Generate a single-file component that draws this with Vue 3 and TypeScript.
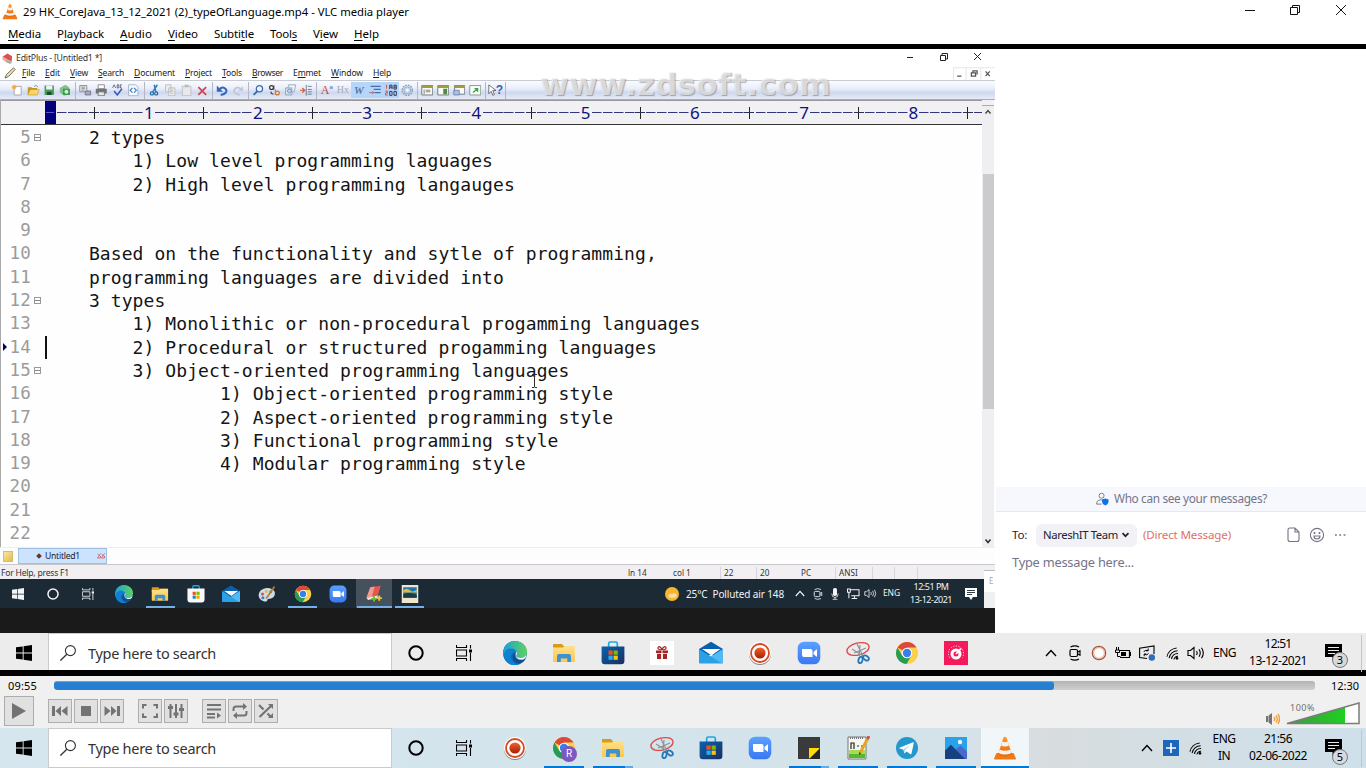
<script setup lang="ts">
type MenuItem = { pre: string; key: string; post: string; w: number }

/* Stretches or tightens the tracking of a label so that it fills a given width. */
const vFit = {
  mounted(el: HTMLElement, binding: { value: number }) {
    el.style.display = 'inline-block'
    el.style.flex = 'none'
    const natural = el.getBoundingClientRect().width
    const count = (el.textContent ?? '').trim().length
    el.style.letterSpacing = `${(binding.value - natural) / Math.max(count, 1)}px`
    el.style.width = `${binding.value}px`
  },
}

const m = (pre: string, key: string, post: string, w: number): MenuItem => ({ pre, key, post, w })

const vlcMenu: MenuItem[] = [
  m('', 'M', 'edia', 33), m('P', 'l', 'ayback', 47), m('', 'A', 'udio', 32), m('', 'V', 'ideo', 30),
  m('Subti', 't', 'le', 40), m('Tool', 's', '', 27), m('V', 'i', 'ew', 25), m('', 'H', 'elp', 25),
]
const editMenu: MenuItem[] = [
  m('', 'F', 'ile', 13), m('', 'E', 'dit', 15), m('', 'V', 'iew', 18), m('', 'S', 'earch', 26),
  m('', 'D', 'ocument', 41), m('', 'P', 'roject', 27), m('', 'T', 'ools', 20), m('', 'B', 'rowser', 31),
  m('E', 'm', 'met', 28), m('', 'W', 'indow', 32), m('', 'H', 'elp', 18),
]

const toolGroups: string[][] = [
  ['new', 'open', 'save', 'saveall'],
  ['preview', 'print', 'spell', 'code'],
  ['cut', 'copy', 'paste', 'del'],
  ['undo', 'redo'],
  ['find', 'replace', 'files', 'goto'],
  ['font', 'hx', 'wrap', 'indent', 'linenum', 'gear'],
  ['win1', 'win2', 'win3', 'win4'],
  ['help'],
]
const pressed = ['wrap', 'indent', 'linenum']
/* Tool buttons whose picture is made of letters. */
const letters: Record<string, string[]> = {
  font: ['A', 'ª'],
  hx: ['Hx'],
  wrap: ['W'],
  help: ['?'],
}

const ruler = Array.from({ length: 86 }, (_, i) => {
  const n = i + 1
  if (n % 10 === 0) return String(n / 10)
  return n % 5 === 0 ? '+' : '-'
})

type Line = { n: number; text: string; fold?: boolean; current?: boolean }
const tab = '    '
const lines: Line[] = [
  { n: 5, text: tab + '2 types', fold: true },
  { n: 6, text: tab + tab + '1) Low level programming laguages' },
  { n: 7, text: tab + tab + '2) High level programming langauges' },
  { n: 8, text: '' },
  { n: 9, text: '' },
  { n: 10, text: tab + 'Based on the functionality and sytle of programming,' },
  { n: 11, text: tab + 'programming languages are divided into' },
  { n: 12, text: tab + '3 types', fold: true },
  { n: 13, text: tab + tab + '1) Monolithic or non-procedural progamming languages' },
  { n: 14, text: tab + tab + '2) Procedural or structured progamming languages', current: true },
  { n: 15, text: tab + tab + '3) Object-oriented programming languages', fold: true },
  { n: 16, text: tab.repeat(4) + '1) Object-oriented programming style' },
  { n: 17, text: tab.repeat(4) + '2) Aspect-oriented programming style' },
  { n: 18, text: tab.repeat(4) + '3) Functional programming style' },
  { n: 19, text: tab.repeat(4) + '4) Modular programming style' },
  { n: 20, text: '' },
  { n: 21, text: '' },
  { n: 22, text: '' },
]

const innerApps = [
  { id: 'edge' }, { id: 'folder', run: true }, { id: 'storew' }, { id: 'mail' }, { id: 'paint' },
  { id: 'chrome', run: true }, { id: 'zoom' }, { id: 'editplus', run: true, on: true }, { id: 'picture', run: true },
]
const midApps = ['edge', 'folder', 'store', 'gift', 'mail', 'record', 'zoom', 'snip', 'chrome', 'gauge']
const lowApps = [
  { id: 'record' }, { id: 'chrome', run: true, badge: 'R' }, { id: 'folder', run: true, multi: true }, { id: 'snip' },
  { id: 'store' }, { id: 'zoom' }, { id: 'sticky', run: true, multi: true }, { id: 'npp', run: true },
  { id: 'telegram', run: true }, { id: 'photos', run: true }, { id: 'vlc', run: true, on: true },
]
const controlGroups = [['prev', 'stop', 'next'], ['full', 'eq'], ['list', 'loop', 'shuffle']]
</script>

<template>
  <div class="screen">
    <svg class="defs" width="0" height="0">
      <defs>
        <linearGradient id="gEdge" x1="0" y1="0" x2="1" y2="0"><stop offset="0" stop-color="#1d9fd8" /><stop offset="1" stop-color="#5fd35c" /></linearGradient>
        <linearGradient id="gFold" x1="0" y1="0" x2="0" y2="1"><stop offset="0" stop-color="#ffe08a" /><stop offset="1" stop-color="#fbc84a" /></linearGradient>
        <linearGradient id="gStore" x1="0" y1="0" x2="1" y2="1"><stop offset="0" stop-color="#0a62b0" /><stop offset="1" stop-color="#1b2f5e" /></linearGradient>
        <linearGradient id="gZoom" x1="0" y1="0" x2="0" y2="1"><stop offset="0" stop-color="#5aa0ff" /><stop offset="1" stop-color="#3a78f2" /></linearGradient>
        <linearGradient id="gRec" x1="0" y1="0" x2="0" y2="1"><stop offset="0" stop-color="#f0642a" /><stop offset="1" stop-color="#a81e00" /></linearGradient>
        <linearGradient id="gCone" x1="0" y1="0" x2="0" y2="1"><stop offset="0" stop-color="#ff9a2b" /><stop offset="1" stop-color="#f0640a" /></linearGradient>
        <linearGradient id="gVol" x1="0" y1="0" x2="1" y2="0"><stop offset="0" stop-color="#3c9a45" /><stop offset="1" stop-color="#1ed01e" /></linearGradient>
      </defs>
      <symbol id="win" viewBox="0 0 16 16"><path d="M0 2.300 6.700 1.400V7.500H0zM7.600 1.200 16 0V7.500H7.600zM0 8.500H6.700V14.600L0 13.700zM7.600 8.500H16V16L7.600 14.800z" fill="currentColor" /></symbol>
      <symbol id="cortana" viewBox="0 0 16 16"><circle cx="8" cy="8" r="6.700" fill="none" stroke="currentColor" stroke-width="2" /></symbol>
      <symbol id="taskview" viewBox="0 0 16 16"><path d="M.5 0V2.500H10.500V0M.5 16V13.500H10.500V16M.5 5H10.500V11H.5zM14.500 0V3.500M14.500 8V16" fill="none" stroke="currentColor" stroke-width="1.100" /><path d="M13 4.500h3v3h-3z" fill="currentColor" /></symbol>
      <symbol id="magnify" viewBox="0 0 16 16"><circle cx="10.400" cy="5.600" r="5" fill="none" stroke="currentColor" stroke-width="1.100" /><path d="M6.800 9.200.4 15.600" stroke="currentColor" stroke-width="1.300" /></symbol>
      <symbol id="edge" viewBox="0 0 24 24"><circle cx="12" cy="12" r="12" fill="#116ab8" /><path d="M.3 10C1.500 3 7 0 12.200 0 19 0 24 5 24 11c0 4-3 6-6.500 6-3 0-4.500-1-4-2 1.300-1.800.8-6-4-6C5 9 1 12 1 16 0 14 0 12 .3 10z" fill="url(#gEdge)" /><path d="M1 16C0 11 4 7 9 7.500c3 .4 5 2.500 4.700 5C11 10 7 13 8 17c1 4 4 6 8 6.300C9 26 2 22 1 16z" fill="#0d80cf" /><path d="M13.500 13c-1.500.8-2.500 6 4.500 6 2 0 3.500-.6 4.500-1.200-2.500 5-8 6-11 3-3-3.500-2-8 1-9z" fill="#124d91" /><path d="M13.500 10.500c1 1.500.4 3-.2 4-.6 1.300 1 2.500 4.200 2.500 2.500 0 5-1.200 6-3.500-.4 3-1.600 5.200-4.500 5.200-4.500.3-7.700-3-6-7z" fill="#f2f7fa" /></symbol>
      <symbol id="folder" viewBox="0 0 24 24"><path d="M1 3.500Q1 3 1.500 3H10l1.500 2H22v4H1z" fill="#d99b13" /><path d="M1 6.500H11L12.500 5H22.200q.6 0 .6.600V20.400q0 .6-.6.600H1.600q-.6 0-.6-.6z" fill="url(#gFold)" /><path d="M5 21v-6q0-2 2-2H17q2 0 2 2V21H15.300V17.500H8.800V21z" fill="#3f92d2" /></symbol>
      <symbol id="store" viewBox="0 0 24 24"><path d="M7.700 6V2.500Q7.700 1 9.200 1h5.600q1.500 0 1.500 1.500V6" fill="none" stroke="#18a8e6" stroke-width="1.700" /><path d="M.6 5.500H23.400V20q0 3.200-3.200 3.200H3.800Q.6 23.200.6 20z" fill="url(#gStore)" /><path d="M7.500 9.500h4.200v4.200H7.500z" fill="#f25022" /><path d="M12.600 9.500h4.200v4.200h-4.200z" fill="#7fba00" /><path d="M7.500 14.600h4.200v4.200H7.500z" fill="#22b0f5" /><path d="M12.600 14.600h4.200v4.200h-4.200z" fill="#ffc20e" /></symbol>
      <symbol id="storew" viewBox="0 0 24 24"><path d="M7.700 6V2.500Q7.700 1 9.200 1h5.600q1.500 0 1.500 1.500V6" fill="none" stroke="#18a8e6" stroke-width="1.700" /><path d="M.6 4.500H23.400V20q0 3.200-3.200 3.200H3.800Q.6 23.200.6 20z" fill="#f8f8f8" /><path d="M7.500 9h4.200v4.200H7.500z" fill="#f25022" /><path d="M12.600 9h4.200v4.200h-4.200z" fill="#7fba00" /><path d="M7.500 14.100h4.200v4.200H7.500z" fill="#0a90d8" /><path d="M12.600 14.100h4.200v4.200h-4.200z" fill="#f0a800" /></symbol>
      <symbol id="gift" viewBox="0 0 24 24"><path d="M0 0h24v24H0z" fill="#fff" /><path d="M6 9.500h12V12H6zM7 12.800h4.200V18H7zM12.800 12.800H17V18h-4.200z" fill="#a62424" /><path d="M12 9C9 9 7.500 8 8 6.500S11 5.500 12 9c1-3.500 3.500-4 4-2.500S15 9 12 9z" fill="none" stroke="#a62424" stroke-width="1.200" /><path d="M12 9v9" stroke="#fff" /></symbol>
      <symbol id="mail" viewBox="0 0 24 24"><path d="M0 8 12 .8 24 8V14H0z" fill="#0a5fac" /><path d="M0 8 12 15.500 24 8V21.500q0 1-1 1H1q-1 0-1-1z" fill="#2aa0e6" /><path d="M3 8H21.500L12.500 14.500z" fill="#f7fbff" /><path d="M24 8 12 15.500 22.700 22.500 24 22z" fill="#52b9f5" /></symbol>
      <symbol id="record" viewBox="0 0 24 24"><circle cx="12" cy="13" r="11" fill="#5b4a46" opacity=".65" /><circle cx="12" cy="12" r="11" fill="#fff" /><circle cx="12" cy="12" r="9" fill="none" stroke="#d54a20" stroke-width="1.800" /><circle cx="12" cy="12" r="5.600" fill="url(#gRec)" /></symbol>
      <symbol id="zoom" viewBox="0 0 24 24"><rect x=".7" y=".7" width="22.600" height="22.600" rx="6.500" fill="url(#gZoom)" /><path d="M5 8h8.500q2 0 2 2v6H7q-2 0-2-2zM16.500 11l3-2.600q.5-.3.500.4v6.600q0 .6-.5.200l-3-2.400z" fill="#fff" /></symbol>
      <symbol id="snip" viewBox="0 0 24 24"><g fill="none"><ellipse cx="12" cy="8" rx="11.300" ry="6" transform="rotate(-14 12 8)" stroke="#e14646" stroke-width="1.300" /><path d="M11 3l6 12M20 7 8 12M6 8l11 7M14 4l-1 11" stroke="#8b9298" stroke-width="1.200" /><ellipse cx="14.500" cy="19" rx="2" ry="3.200" transform="rotate(15 14.500 19)" stroke="#2577b8" stroke-width="1.800" /><ellipse cx="20" cy="17" rx="3.200" ry="2" transform="rotate(35 20 17)" stroke="#2577b8" stroke-width="1.800" /></g></symbol>
      <symbol id="chrome" viewBox="0 0 24 24"><circle cx="12" cy="12" r="11" fill="#fdd04a" /><path d="M12 12 2.500 6.500A11 11 0 0 1 21.500 6.500H12z" fill="#db4a39" /><path d="M2.470 6.500A11 11 0 0 0 11.500 23L16.500 14.500 12 12 7.300 14.700z" fill="#259b58" /><circle cx="12" cy="12" r="5.300" fill="#fff" /><circle cx="12" cy="12" r="4.200" fill="#3b7ded" /></symbol>
      <symbol id="gauge" viewBox="0 0 24 24"><path d="M0 0h24v24H0z" fill="#f5185a" /><circle cx="12" cy="13" r="4" fill="none" stroke="#fff" stroke-width="3" /><path d="M12 13 17 7.500" stroke="#fff" stroke-width="1.800" /><path d="M5.500 16.500A7.600 7.600 0 1 1 18.500 16.500" fill="none" stroke="#fff" stroke-dasharray="1 1.600" /></symbol>
      <symbol id="sticky" viewBox="0 0 24 24"><path d="M1 1h22v22H1z" fill="#3a3a3a" /><path d="M12 23V12h11z" fill="#ffd900" /><path d="M12 23 23 12V23z" fill="#272727" /><path d="M12.500 12.500H22.500L12.500 22.500z" fill="#ffdd00" /></symbol>
      <symbol id="npp" viewBox="0 0 24 24"><path d="M2 1h18v22H2z" fill="#f7f7f2" stroke="#777" /><path d="M3 14h16v8H3z" fill="#a4dd55" /><path d="M3 18h16v4H3z" fill="#55ba28" /><path d="M5 13V7h3v6M11 10h2M15 10h2" fill="none" stroke="#222" stroke-width="1.200" /><path d="M4 2h14" stroke="#777" stroke-width="2" stroke-dasharray="1 1" /><path d="M22 2 14 17" stroke="#e7a425" stroke-width="3" /><path d="M23 0 21.500 3" stroke="#cc5050" stroke-width="3" /><path d="M13.500 16 13 19l2-1.500z" fill="#222" /></symbol>
      <symbol id="telegram" viewBox="0 0 24 24"><circle cx="12" cy="12" r="11" fill="#2298cf" /><path d="M4.500 11.800 18 6.300q1-.3.800.8L16.500 17.600q-.3 1-1.300.4l-3.500-2.600-1.700 1.700q-.5.400-.7-.2l-1-3.400-3.700-1.100q-.8-.3-.1-.6z" fill="#fff" /><path d="m8.500 13.500 7-4.800-5.500 5.500v2.900z" fill="#a9d5ec" /></symbol>
      <symbol id="photos" viewBox="0 0 24 24"><path d="M1 1h22v22H1z" fill="#2ba2e8" /><path d="M12 13.500 16.500 9.500 23 15.500V23H12z" fill="#4a67cc" /><path d="M1 14.500 7 8.800 21 23H1z" fill="#174080" /><circle cx="16" cy="6" r="2.200" fill="#e8f5ff" /></symbol>
      <symbol id="vlc" viewBox="0 0 24 24"><path d="M3.500 17h17L23 22.500q0 1-1 1H2q-1 0-1-1z" fill="#f07a16" /><path d="M10.500 1.500Q12 0 13.500 1.500L19 18.500Q12 22 5 18.500z" fill="url(#gCone)" /><path d="M9.300 5.600Q12 7 14.800 5.600L16 9.500Q12 11.500 8 9.500zM6.600 13.500Q12 16.200 17.400 13.500L18.500 17Q12 20 5.500 17z" fill="#f2f2f0" /></symbol>
      <symbol id="paint" viewBox="0 0 24 24"><path d="M1 15C0 8 7 3 14 4s10 5 8 10-8 4-9 5 0 3-3 3-8-2-9-7z" fill="#cfdbe4" /><circle cx="6" cy="12" r="2" fill="#d9504a" /><circle cx="11" cy="8.500" r="2" fill="#e6b93c" /><circle cx="17" cy="9" r="2" fill="#4f9e50" /><circle cx="6.500" cy="17" r="2" fill="#3b7cc9" /><path d="M22 2 11 18" stroke="#b37a3c" stroke-width="2.200" /></symbol>
      <symbol id="editplus" viewBox="0 0 24 24"><path d="M7 3 21 1 17 14 2 17z" fill="#e4574f" /><path d="M7 3 13 2 9 16 2 17z" fill="#f29a92" /><path d="M2 17 17 14V17L4 20z" fill="#f6e5df" /><path d="M12 15v7M8.500 18.500h7" stroke="#67c13a" stroke-width="2.600" /><path d="M19 14v7M15.500 17.500h7" stroke="#f0c52d" stroke-width="2.400" /></symbol>
      <symbol id="epbook" viewBox="0 0 24 24"><path d="M1 8 12 1 22 7 21 19 10 13z" fill="#d9534c" /><path d="M1 8 10 13 9 20 1 14z" fill="#f1a9a2" /><path d="M9 13 22 20 18 24 9 20z" fill="#a9b09a" /></symbol>
      <symbol id="picture" viewBox="0 0 24 24"><path d="M1 0h22v24H1z" fill="#efe6cd" /><path d="M3 3h18v14H3z" fill="#1876b4" /><path d="M3 7q5-4 9 0t9-1V10H3z" fill="#e3b73b" /><path d="M3 12q9-3 18 1v4H3z" fill="#183d48" /></symbol>

      <symbol id="t-new" viewBox="0 0 16 16"><path d="M4 3h9v11H4z" fill="#fff" stroke="#999" /><path d="M4 1v6M1 4h6M2 2l4 4M6 2 2 6" stroke="#f3a83a" stroke-width="1.300" /></symbol>
      <symbol id="t-open" viewBox="0 0 16 16"><path d="M1 4h5l1 1h6v9H1z" fill="#c99422" /><path d="M4 7h12l-3 7H1z" fill="#f8d668" stroke="#b78520" stroke-width=".6" /><path d="M9 3q3-3 5 1" fill="none" stroke="#48a" /></symbol>
      <symbol id="t-save" viewBox="0 0 16 16"><path d="M2 2h12v12H2z" fill="#4d9b5b" /><path d="M4 2h8v5H4z" fill="#eef5ee" /><path d="M5 10h6v4H5z" fill="#1c4f30" /></symbol>
      <symbol id="t-saveall" viewBox="0 0 16 16"><path d="M1 5 8 1l5 3v8l-6 3-6-4z" fill="#7fc28b" /><path d="M5 6h9v8H5z" fill="#3f9a52" /><circle cx="9.500" cy="10" r="2.500" fill="#d9ead9" /></symbol>
      <symbol id="t-preview" viewBox="0 0 16 16"><path d="M1 2h9v8H1z" fill="#eee" stroke="#778" /><path d="M3 4h5M3 6h5M3 8h4" stroke="#778" /><path d="M8 9h7v5H8z" fill="#aab" stroke="#667" /></symbol>
      <symbol id="t-print" viewBox="0 0 16 16"><path d="M4 1h8v5H4z" fill="#fff" stroke="#777" /><path d="M1 6h14v6H1z" fill="#6f737a" /><path d="M4 10h8v5H4z" fill="#e6e6e6" stroke="#666" /></symbol>
      <symbol id="t-spell" viewBox="0 0 16 16"><path d="M2 5 4 1l2 4M8 1v4h2V1zM14 1h-2v4h2" fill="none" stroke="#456" /><path d="m4 9 4 5 6-8" fill="none" stroke="#3a58c0" stroke-width="2" /></symbol>
      <symbol id="t-code" viewBox="0 0 16 16"><path d="M2 1h9l3 3v11H2z" fill="#f6f9fd" stroke="#9ab" /><path d="M7 5 4 8l3 3M9 5l3 3-3 3" fill="none" stroke="#3a85c8" stroke-width="1.500" /></symbol>
      <symbol id="t-cut" viewBox="0 0 16 16"><path d="M12 1 6 10M8 1l2 9" stroke="#3280c0" stroke-width="2" /><circle cx="5" cy="12" r="2" fill="none" stroke="#246ea8" stroke-width="1.600" /><circle cx="10.500" cy="12" r="2" fill="none" stroke="#246ea8" stroke-width="1.600" /></symbol>
      <symbol id="t-copy" viewBox="0 0 16 16"><path d="M2 1h7v9H2zM6 5h8v10H6z" fill="#eee" stroke="#b5b5ba" /><path d="M8 8h4M8 10h4M8 12h4" stroke="#bbb" /></symbol>
      <symbol id="t-paste" viewBox="0 0 16 16"><path d="M3 3h11v12H3z" fill="#e9e9ec" stroke="#b7b7bd" /><path d="M6 1h5v3H6z" fill="#b9b9bf" /></symbol>
      <symbol id="t-del" viewBox="0 0 16 16"><path d="M3 4 13 14M13 4 3 14" stroke="#d2424a" stroke-width="2.200" /></symbol>
      <symbol id="t-undo" viewBox="0 0 16 16"><path d="M6 14c7-1 9-5 6-8-2-2-5-2-8 1" fill="none" stroke="#3468b8" stroke-width="2.600" /><path d="M1 2v8h8z" fill="#3468b8" /></symbol>
      <symbol id="t-redo" viewBox="0 0 16 16"><path d="M10 14c-7-1-9-5-6-8 2-2 5-2 8 1" fill="none" stroke="#c2c7d0" stroke-width="2.200" /><path d="M14 3v6H8z" fill="#c2c7d0" /></symbol>
      <symbol id="t-find" viewBox="0 0 16 16"><circle cx="9.500" cy="6" r="4" fill="#eaf3ff" stroke="#3a6cb0" stroke-width="1.600" /><path d="M7 9 2 14" stroke="#3a6cb0" stroke-width="2.400" /></symbol>
      <symbol id="t-replace" viewBox="0 0 16 16"><circle cx="4.500" cy="4.500" r="2.500" fill="none" stroke="#334" stroke-width="1.500" /><path d="M7.500 2v5.500M4 9.500v2.500l3 1" fill="none" stroke="#334" stroke-width="1.300" /><circle cx="12" cy="11.500" r="2.500" fill="none" stroke="#d87b2c" stroke-width="1.600" /><path d="M9.500 7v7" stroke="#d87b2c" stroke-width="1.500" /></symbol>
      <symbol id="t-files" viewBox="0 0 16 16"><path d="M6 1h9l-2 9H4z" fill="#eaf1f9" stroke="#8aa0bc" /><path d="M2 5h8v9H2z" fill="#dce6f2" stroke="#7f97b5" /><circle cx="7" cy="9" r="2.600" fill="#b9d3ef" stroke="#6f87a5" /></symbol>
      <symbol id="t-goto" viewBox="0 0 16 16"><path d="M0 8h6M3 5l3 3-3 3" fill="none" stroke="#d05a30" stroke-width="1.500" /><path d="M8 1v14M10 3h5M10 7h5M10 10h5M10 13h5" stroke="#567" /></symbol>
      <symbol id="t-indent" viewBox="0 0 16 16"><path d="M2 3h13M6 7h9M7 11h8" stroke="#456fa8" stroke-width="1.600" /><path d="M0 11h6M4 9l2 2-2 2" fill="none" stroke="#cc4d3c" /></symbol>
      <symbol id="t-linenum" viewBox="0 0 16 16"><path d="M2 1v5M.5 9h2.500v2.500H.5V14h3" fill="none" stroke="#cc4d3c" stroke-width="1.200" /><path d="M6 6.500V1.500h3v5M6 4h3M11.500 1.500h3v5h-3zM11.500 4h3M6 9.500h3v5H6zM11.500 9.500h3v5h-3z" fill="none" stroke="#2c3450" stroke-width="1.200" /></symbol>
      <symbol id="t-gear" viewBox="0 0 16 16"><circle cx="8" cy="8" r="6.500" fill="none" stroke="#8ba1c0" stroke-width="2" stroke-dasharray="2.200 1.200" /><circle cx="8" cy="8" r="4.500" fill="#c6d6ea" stroke="#8ba1c0" /><circle cx="8" cy="8" r="1.800" fill="#f7f9fc" /></symbol>
      <symbol id="t-win1" viewBox="0 0 16 16"><path d="M1 2h14v12H1z" fill="#fbfbf3" stroke="#53606b" /><path d="M1 2h14v3H1z" fill="#9c9f3a" /><path d="M4 7v6M6 8h6M6 10h6" stroke="#666" /></symbol>
      <symbol id="t-win2" viewBox="0 0 16 16"><path d="M1 2h14v12H1z" fill="#fbfbf3" stroke="#53606b" /><path d="M1 2h14v3H1z" fill="#9c9f3a" /><path d="M8 6h5v7H8z" fill="#4d8d46" /></symbol>
      <symbol id="t-win3" viewBox="0 0 16 16"><path d="M2 2h13v11H2z" fill="#fbfbf3" stroke="#53606b" /><path d="M2 2h13v3H2z" fill="#9c9f3a" /><path d="M1 8h7v6H1z" fill="#a9c3e6" stroke="#67a" /></symbol>
      <symbol id="t-win4" viewBox="0 0 16 16"><path d="M1 2h14v12H1z" fill="#fbfdfb" stroke="#6d8673" /><path d="m5 11 6-5M7 6h4v4" fill="none" stroke="#3aa34a" stroke-width="1.700" /></symbol>
      <symbol id="t-help" viewBox="0 0 10 16"><path d="M1 1v11l3-3 2 5 2-1-2-5h4z" fill="#fff" stroke="#555" /></symbol>

      <symbol id="c-prev" viewBox="0 0 16 16"><path d="M0 3h3v10H0zM9 3v10L3.500 8zM15.500 3v10L9.500 8z" fill="#737373" /></symbol>
      <symbol id="c-stop" viewBox="0 0 16 16"><path d="M3 3h10v10H3z" fill="#737373" /></symbol>
      <symbol id="c-next" viewBox="0 0 16 16"><path d="M13 3h3v10h-3zM.5 3v10L6.500 8zM7 3v10l5.500-5z" fill="#737373" /></symbol>
      <symbol id="c-full" viewBox="0 0 16 16"><path d="M1 5.500V2h3.500M11.500 2H15v3.500M1 10.500V14h3.500M11.500 14H15v-3.500" fill="none" stroke="#737373" stroke-width="2" /></symbol>
      <symbol id="c-eq" viewBox="0 0 16 16"><path d="M2.500 1v14M8 1v14M13.500 1v14" stroke="#737373" stroke-width="2" /><path d="M0 3h5v3H0zM5.500 9.500h5v3h-5zM11 5h5v3h-5z" fill="#737373" /></symbol>
      <symbol id="c-list" viewBox="0 0 16 16"><path d="M1 2h14M1 6.500h14M1 11h8M1 14.500h8" stroke="#737373" stroke-width="2" /><path d="M11 9.500v6l4-3z" fill="#737373" /></symbol>
      <symbol id="c-loop" viewBox="0 0 16 16"><path d="M1.500 8V6Q1.500 3.500 4 3.500H12M14.500 8v2q0 2.500-2.500 2.500H4" fill="none" stroke="#737373" stroke-width="2" /><path d="M11 0v7l4-3.500zM5 9v7l-4-3.500z" fill="#737373" /></symbol>
      <symbol id="c-shuffle" viewBox="0 0 16 16"><path d="M1 2 5.500 6.500M9.500 10.500 13 14M1.500 14 13 3" fill="none" stroke="#737373" stroke-width="2.200" /><path d="M10 1h5v5zM15 10v5h-5z" fill="#737373" /></symbol>

      <symbol id="chev" viewBox="0 0 12 8"><path d="m1 7 5-5.500L11 7" fill="none" stroke="currentColor" stroke-width="1.400" /></symbol>
      <symbol id="meet" viewBox="0 0 12 16"><rect x="1" y="4.500" width="7.500" height="7" rx="1.500" fill="none" stroke="currentColor" stroke-width="1.200" /><path d="m9 7 2-1.200v4.400L9 9M1.500 2Q6-.3 10 2M1.500 14Q6 16.300 10 14" fill="none" stroke="currentColor" stroke-width="1.100" /></symbol>
      <symbol id="ring" viewBox="0 0 16 16"><circle cx="8" cy="8" r="6.700" fill="#fff" stroke="#a0583f" stroke-width="1.200" /><circle cx="8" cy="8" r="5.400" fill="none" stroke="#f2a183" /></symbol>
      <symbol id="battery" viewBox="0 0 16 12"><path d="M4 3.500h10.500v7H5M15.500 5v4" fill="none" stroke="currentColor" stroke-width="1.200" /><path d="M6 5h5v4H6z" fill="currentColor" /><path d="M.5 3h4v2.500H.5zM1.500 0v3M3.500 0v3M2.500 6v3.500h3" fill="none" stroke="currentColor" /></symbol>
      <symbol id="sync" viewBox="0 0 16 16"><path d="M8 13.500.6 12.500V3.200L15 1v8" fill="none" stroke="currentColor" stroke-width="1.100" /><path d="M4.800 7q.7-2.500 4-1.500M9.500 8.500q-1.500 2.200-4 .8M9.200 3.500v2.300H7M5.200 11.200V9h2" fill="none" stroke="currentColor" /><circle cx="12.800" cy="12.500" r="3.200" fill="#2f6db5" /></symbol>
      <symbol id="wifi" viewBox="0 0 14 14"><g fill="none" stroke="currentColor" stroke-width="1.100"><path d="M1 10.500A12 12 0 0 1 11.500 1M3.300 12A9.500 9.500 0 0 1 12.500 4M6 13A6.500 6.500 0 0 1 13 7M8.500 13.500A4 4 0 0 1 13 10" /></g><circle cx="11.800" cy="12.200" r="1.400" fill="currentColor" /></symbol>
      <symbol id="sound" viewBox="0 0 18 14"><path d="M1 4.500h2.500L7 1.500v11L3.500 9.500H1z" fill="none" stroke="currentColor" stroke-width="1.100" /><path d="M9.500 5q1.300 2 0 4M12 3.300q2.500 3.700 0 7.400M14.500 1.800q3.600 5.200 0 10.400" fill="none" stroke="currentColor" stroke-width="1.100" /></symbol>
      <symbol id="note" viewBox="0 0 18 18"><path d="M0 0h17v13H11l-3.500 4v-4H0z" fill="currentColor" /><path d="M3 3.500h11M3 6.500h11M3 9.500h7" stroke="#e8ecee" stroke-width="1.100" /></symbol>
      <symbol id="mic" viewBox="0 0 10 16"><rect x="2.500" y="1" width="5" height="10" rx="2" fill="currentColor" /><path d="M1 8q0 5 4 5t4-5M5 13v2M2 15.300h6" fill="none" stroke="currentColor" /></symbol>
      <symbol id="net" viewBox="0 0 14 13"><path d="M3.500 2h9.500v6.500H4.500M8 8.500V11M5 11.500h6M.5 1v3.500h3V1zM2 5v6" fill="none" stroke="currentColor" stroke-width="1.100" /></symbol>
    </svg>

    <header class="vlc-title">
      <svg class="i17"><use href="#vlc" /></svg>
      <span v-fit="386">29 HK_CoreJava_13_12_2021 (2)_typeOfLanguage.mp4 - VLC media player</span>
      <svg class="wincontrols" viewBox="0 0 104 14" fill="none" stroke="#111">
        <path d="M1 7.500h10M46.500 4.500h7v7h-7zM48.500 4V2.500h7v7H54M92 2l10 10M102 2 92 12" />
      </svg>
    </header>
    <nav class="vlc-menu">
      <span v-for="i in vlcMenu" :key="i.post + i.w" v-fit="i.w">{{ i.pre }}<u>{{ i.key }}</u>{{ i.post }}</span>
    </nav>

    <main class="video">
      <div class="stage">
        <section class="desktop">
          <div class="ep-title">
            <svg class="i11"><use href="#epbook" /></svg>
            <span v-fit="86">EditPlus - [Untitled1 *]</span>
            <svg class="ep-controls" viewBox="0 0 76 10" fill="none" stroke="#222"><path d="M1 5.500h6M34.500 3.500h5v5h-5zM36 3V1.500h5.500V7H40M68 1l7 7M75 1l-7 7" /></svg>
          </div>
          <div class="ep-menu">
            <svg class="pencil" viewBox="0 0 12 12"><path d="m1 11 1.500-3.500L9.500.8l1.700 1.700L4.500 9.500z" fill="#e8e2b0" stroke="#665f49" stroke-width=".9" /></svg>
            <span v-for="i in editMenu" :key="i.post + i.w" v-fit="i.w">{{ i.pre }}<u>{{ i.key }}</u>{{ i.post }}</span>
            <svg class="mdi" viewBox="0 0 40 12" fill="none" stroke="#555"><path d="M.5 12V.5H40M12.500 1v11M26.500 1v11" stroke="#e6e6e9" /><path d="M4 8.500h4M17.500 5.500h4v3h-4zM19 5V3.500h4V7M31 4l4 4.500M35 4l-4 4.500" stroke-width="1.200" /></svg>
          </div>
          <div class="toolbar">
            <div v-for="(g, gi) in toolGroups" :key="gi" class="group">
              <span v-for="t in g" :key="t" class="tool" :class="[t, { pressed: pressed.includes(t) }]">
                <svg v-if="!letters[t] || t === 'help'"><use :href="'#t-' + t" /></svg>
                <i v-for="c in letters[t]" :key="c">{{ c }}</i>
              </span>
            </div>
          </div>
          <div class="watermark"><span v-fit="291">www.zdsoft.com</span></div>
          <div class="work">
            <div class="pane">
              <div class="ruler">
                <span v-for="(c, i) in ruler" :key="i" class="mark" :class="{ dash: c === '-', plus: c === '+', origin: i === 0 }">{{ c === '-' || c === '+' ? '' : c }}</span>
              </div>
              <div class="code">
                <div v-for="l in lines" :key="l.n" class="line">
                  <i class="pointer" :class="{ show: l.current }"></i>
                  <span class="num">{{ l.n }}</span>
                  <span class="fold" :class="{ show: l.fold }"></span>
                  <i class="caret" :class="{ show: l.current }"></i>
                  <span class="src">{{ l.text }}</span>
                </div>
              </div>
            </div>
            <svg class="ibeam" viewBox="0 0 7 14"><path d="M1 .5h2l.5.5.5-.5h2M3.500 1v12M1 13.500h2l.5-.5.5.5h2" fill="none" stroke="#333" /></svg>
            <div class="vscroll">
              <svg viewBox="0 0 8 6"><path d="m1.500 4.500 2.500-3 2.500 3" fill="none" stroke="#444" stroke-width="1.400" /></svg>
              <div class="thumb"></div>
              <svg viewBox="0 0 8 6"><path d="m1.500 1.500 2.500 3 2.500-3" fill="none" stroke="#333" stroke-width="1.600" /></svg>
            </div>
          </div>
          <div class="tabs">
            <i class="doc"></i>
            <div class="tab"><i class="dot"></i><span v-fit="35">Untitled1</span><svg class="pin" viewBox="0 0 8 6"><path d="M.5 1 3.500 3.500M3.500.5.5 5H3.500V3M4.500 1 7.500 3.500M7.500.5 4.500 5H7.500V3" fill="none" stroke="#c26a7d" stroke-width=".9" /></svg></div>
          </div>
          <div class="status">
            <span v-fit="68">For Help, press F1</span>
            <div class="cells">
              <span class="ln">ln 14</span><span class="col">col 1</span><span class="s1">22</span><span class="s2">20</span><span class="s3">PC</span><span class="s4">ANSI</span><span class="s5"></span><span class="s6"></span><span class="s7"></span>
            </div>
          </div>
          <div class="inner-bar">
            <span class="sys"><svg><use href="#win" /></svg></span>
            <span class="sys"><svg><use href="#cortana" /></svg></span>
            <span class="sys last"><svg><use href="#taskview" /></svg></span>
            <span v-for="a in innerApps" :key="a.id" class="app" :class="{ run: a.run, on: a.on }"><svg><use :href="'#' + a.id" /></svg></span>
            <div class="inner-tray">
              <svg class="sun" viewBox="0 0 16 16"><circle cx="8" cy="8" r="7" fill="#f8b530" /><path d="M4 10q1-3 4-2 4-2 5 1.500Q12 12 8 12q-3 0-4-2z" fill="#f9dca0" /></svg>
              <span v-fit="98" class="weather">25°C&nbsp; Polluted air 148</span>
              <svg class="w9"><use href="#chev" /></svg>
              <svg class="w10"><use href="#meet" /></svg>
              <svg class="w8"><use href="#mic" /></svg>
              <svg class="w12"><use href="#net" /></svg>
              <svg class="w13"><use href="#sound" /></svg>
              <span v-fit="17" class="lang">ENG</span>
              <div class="clock"><span v-fit="35">12:51 PM</span><span v-fit="42">13-12-2021</span></div>
              <svg class="bubble" viewBox="0 0 12 12"><path d="M0 0h12v9H8l-2 3-2-3H0z" fill="#fff" /><path d="M2 2.500h8M2 4.500h8M2 6.500h5" stroke="#1b2a35" stroke-width=".9" /></svg>
            </div>
          </div>
          <div class="peek"><span>E</span></div>
        </section>

        <aside class="chat">
          <div class="who">
            <svg viewBox="0 0 14 14"><circle cx="6" cy="3.500" r="2.700" fill="none" stroke="#747487" /><path d="M6 12.500H.7Q.7 8 5 8h2" fill="none" stroke="#747487" /><path d="M10 6.500l3.500 1V10q0 2.500-3.500 4Q6.500 12.500 6.500 10V7.500z" fill="#0e72ed" /></svg>
            <span v-fit="153">Who can see your messages?</span>
          </div>
          <div class="to">
            <span v-fit="15">To:</span>
            <div class="pill"><span v-fit="75">NareshIT Team</span><svg viewBox="0 0 8 6"><path d="m1 1.200 3 3 3-3" fill="none" stroke="#232333" stroke-width="1.700" /></svg></div>
            <span v-fit="88" class="direct">(Direct Message)</span>
            <svg class="tools" viewBox="0 0 60 16" fill="none" stroke="#747487" stroke-width="1.100"><path d="M8 1H3Q1 1 1 3V12.500q0 2 2 2h7q2 0 2-2V5zM8 1v4h4" /><circle cx="30" cy="8" r="6.600" /><path d="M27 9q0 3 3 3t3-3z" /><path d="M27.500 5v2M32.500 5v2M48 8h1.800M52.300 8h1.800M56.600 8h1.800" stroke-width="1.600" /></svg>
          </div>
          <div class="compose"><span v-fit="122">Type message here...</span></div>
        </aside>
      </div>

      <div class="bar mid">
        <span class="start"><svg class="i16"><use href="#win" /></svg></span>
        <div class="search"><svg class="i16"><use href="#magnify" /></svg><span v-fit="128">Type here to search</span></div>
        <span class="cell"><svg class="i16"><use href="#cortana" /></svg></span>
        <span class="cell"><svg class="i16"><use href="#taskview" /></svg></span>
        <span v-for="a in midApps" :key="a" class="cell app"><svg class="i24"><use :href="'#' + a" /></svg></span>
        <div class="tray">
          <svg class="chev"><use href="#chev" /></svg>
          <svg class="meet"><use href="#meet" /></svg>
          <svg class="ring"><use href="#ring" /></svg>
          <svg class="battery"><use href="#battery" /></svg>
          <svg class="i16"><use href="#sync" /></svg>
          <svg class="wifi"><use href="#wifi" /></svg>
          <svg class="sound"><use href="#sound" /></svg>
          <span v-fit="23" class="eng">ENG</span>
          <div class="time"><span v-fit="27">12:51</span><span v-fit="58">13-12-2021</span></div>
          <div class="notice"><svg><use href="#note" /></svg><b>3</b></div>
          <i class="show-desktop"></i>
        </div>
      </div>
    </main>

    <section class="controls">
      <div class="seek">
        <span v-fit="29">09:55</span>
        <div class="track"><div class="played"></div></div>
        <span v-fit="28">12:30</span>
      </div>
      <div class="buttons">
        <span class="btn play"><svg viewBox="0 0 16 18"><path d="M1 1v16l14-8z" fill="#737373" /></svg></span>
        <div v-for="(g, gi) in controlGroups" :key="gi" class="btn-group">
          <span v-for="b in g" :key="b" class="btn"><svg><use :href="'#c-' + b" /></svg></span>
        </div>
        <div class="volume">
          <svg class="speaker" viewBox="0 0 14 12"><path d="M0 3h2v6H0zM2.500 2.500 6 0v12L2.500 9.500z" fill="#747474" /><path d="M8 4q1.500 2 0 4M10 2.500q2.500 3.500 0 7M12 1q3 5 0 10" fill="none" stroke="#f29a2e" stroke-width="1.300" /></svg>
          <div class="wedge">
            <svg viewBox="0 0 74 23"><path d="M1 21.500 73 1v20.500z" fill="#fff" /><path d="M1 21.500 59 5v16.500z" fill="url(#gVol)" /><path d="M1 21.500 73 1v20.500z" fill="none" stroke="#7b7b7b" stroke-width="1.500" /></svg>
            <span v-fit="25">100%</span>
          </div>
        </div>
      </div>
    </section>

    <footer class="bar low">
      <span class="start"><svg class="i16"><use href="#win" /></svg></span>
      <div class="search"><svg class="i16"><use href="#magnify" /></svg><span v-fit="128">Type here to search</span></div>
      <span class="cell"><svg class="i16"><use href="#cortana" /></svg></span>
      <span class="cell"><svg class="i16"><use href="#taskview" /></svg></span>
      <span v-for="a in lowApps" :key="a.id" class="cell app" :class="{ run: a.run, on: a.on, multi: a.multi }"><svg class="i24"><use :href="'#' + a.id" /></svg><b v-if="a.badge" class="badge">{{ a.badge }}</b></span>
      <div class="tray">
        <svg class="chev"><use href="#chev" /></svg>
        <svg class="plusbox" viewBox="0 0 16 16"><path d="M0 0h16v16H0z" fill="#1c67bd" /><path d="M8 3v10M3 8h10" stroke="#fff" stroke-width="1.600" /></svg>
        <svg class="wifi"><use href="#wifi" /></svg>
        <div class="two"><span v-fit="23">ENG</span><span v-fit="12">IN</span></div>
        <div class="time"><span v-fit="28">21:56</span><span v-fit="58">02-06-2022</span></div>
        <div class="notice"><svg><use href="#note" /></svg><b>5</b></div>
        <i class="show-desktop"></i>
      </div>
    </footer>
  </div>
</template>

<style>
html, body { margin: 0; overflow: hidden; background: #fff; }
</style>

<style scoped>
* { box-sizing: border-box; }
.screen { width: 1366px; height: 768px; overflow: hidden; display: flex; flex-direction: column; font: 12px/1 "Noto Sans", "Open Sans", sans-serif; color: #111; background: #fff; white-space: nowrap; }
.defs { position: absolute; }
svg { display: block; flex: none; }
u { text-underline-offset: 2px; text-decoration-thickness: 1px; }
.i11 { width: 11px; height: 11px; }
.i16 { width: 16px; height: 16px; }
.i17 { width: 16px; height: 17px; }
.i24 { width: 24px; height: 24px; }

.vlc-title { height: 23px; flex: none; display: flex; align-items: center; padding-left: 2px; gap: 5px; font-size: 11.300px; color: #000; }
.wincontrols { width: 104px; height: 14px; margin: -4px 18px 0 auto; }
.vlc-menu { height: 21px; flex: none; display: flex; align-items: center; gap: 16px; padding-left: 8px; font-size: 11.500px; color: #000; }

.video { height: 632px; flex: none; border-top: 5px solid #000; border-bottom: 6px solid #000; display: flex; flex-direction: column; }
.stage { height: 584px; flex: none; display: flex; }
.desktop { width: 995px; height: 584px; position: relative; background: #1a1a1a; display: flex; flex-direction: column; overflow: hidden; font-size: 9px; }
.desktop > div { flex: none; }
.ep-title { height: 16px; background: #fff; display: flex; align-items: center; padding: 2px 0 0 2px; gap: 3px; font-size: 8.800px; color: #333; }
.ep-controls { width: 76px; height: 10px; margin: -2px 13.500px 0 auto; }
.ep-menu { height: 15px; background: #fff; display: flex; align-items: center; gap: 10px; padding: 1px 0 0 4px; color: #222; font-size: 8.600px; }
.ep-menu u { text-underline-offset: 1px; }
.pencil { width: 12px; height: 12px; margin-right: -4px; }
.mdi { width: 42px; height: 13px; margin: 0 0 0 auto; }
.toolbar { height: 20px; border-top: 1px solid #c9cbd2; border-bottom: 1px solid #aaadb5; background: linear-gradient(#fbfbfe, #ebeffa 40%, #ced8ef 65%, #e6ebf8); display: flex; align-items: center; padding-left: 8px; }
.group { display: flex; padding: 0 2px 0 1.300px; border-right: 1px solid #b3b7c2; height: 17px; align-items: center; }
.tool { width: 16px; height: 16px; display: flex; align-items: center; justify-content: center; }
.tool svg { width: 12.500px; height: 12.500px; }
.tool i { font: 12px/14px "Liberation Serif", serif; }
.font i { color: #c64444; }
.font i + i { color: #445f9a; }
.hx i { color: #a7a9b4; font-size: 10px; }
.wrap i { color: #56799f; font-weight: bold; font-style: italic; font-size: 11px; }
.tool.help svg { width: 8px; height: 13px; }
.help i { color: #345fb8; font: bold 12px/14px "Liberation Sans", sans-serif; }
.pressed { background: #b5d5fa; }
.watermark { position: absolute; left: 540px; top: 21px; font: bold 31px/28px "DejaVu Sans", Verdana, sans-serif; color: rgba(255, 255, 255, 0.6); text-shadow: 1px 1px 1px rgba(110, 110, 115, 0.55), 0 -0.500px 0 rgba(200, 200, 200, 0.4); }

.work { height: 447px; display: flex; position: relative; background: #fefefe; overflow: hidden; }
.pane { width: 982px; flex: none; border-left: 1px solid #aaa; }
.ruler { height: 25px; background: #f1f0f3; border-top: 1px solid #999; border-bottom: 1px solid #333; overflow: hidden; padding-left: 44px; display: flex; }
.mark { flex: none; width: 10.930px; height: 24px; display: flex; align-items: center; justify-content: center; color: #10107c; font: 17px/24px "Noto Sans", sans-serif; }
.dash, .plus { background: linear-gradient(#34347c, #34347c) 50% 11px / 9.500px 1px no-repeat; }
.plus { background: linear-gradient(#303050, #303050) 50% 11px / 10px 1px no-repeat, linear-gradient(#222, #222) 50% 50% / 1px 12px no-repeat; }
.origin { background: linear-gradient(#5a5acd, #5a5acd) 50% 11px / 8px 1px no-repeat #00007f; }
.code { height: 422px; overflow: hidden; padding-top: 1px; font: 18px/23.300px "DejaVu Sans Mono", monospace; }
.line { height: 23.300px; display: flex; align-items: center; }
.pointer { width: 4px; height: 0; margin-left: 2px; flex: none; }
.pointer.show { border-left: 4px solid #000060; border-top: 4px solid transparent; border-bottom: 4px solid transparent; }
.num { width: 24px; text-align: right; color: #9b9b9b; font-size: 17.500px; letter-spacing: .2px; flex: none; }
.fold { width: 7px; height: 7px; margin: 0 7px 0 3px; flex: none; }
.fold.show { border: 1px solid #999; background: linear-gradient(#888, #888) 50% 50% / 5px 1px no-repeat; }
.caret { width: 2px; height: 23px; margin: 0 -1.800px 0 -3px; flex: none; }
.caret.show { background: #111; }
.src { white-space: pre; color: #141414; letter-spacing: .085px; }
.ibeam { position: absolute; left: 531px; top: 274px; width: 7px; height: 14px; }
.vscroll { width: 12px; height: 447px; background: linear-gradient(#f1f0f3 5px, #aaa 5px, #aaa 6px, #efeef1 6px); display: flex; flex-direction: column; align-items: center; padding: 9px 0 3px; }
.vscroll svg { width: 8px; height: 6px; }
.thumb { width: 11px; height: 235px; margin: 59px 0 129px; background: #cbcbcd; flex: none; }
.tabs { height: 17px; background: #fdfdfe; display: flex; align-items: center; padding-left: 3px; border-top: 1px solid #eee; }
.doc { width: 10px; height: 11px; background: linear-gradient(135deg, #f8e7a0, #e3bd45); border: 1px solid #d7bc6b; }
.tab { width: 89px; height: 16px; margin-left: 5px; background: #cbe3fc; border: 1px solid #9fbfe4; display: flex; align-items: center; padding: 0 1px 0 18px; color: #223; font-size: 8.600px; }
.pin { width: 8px; height: 6px; margin-left: auto; }
.dot { width: 4px; height: 4px; background: #6a3030; transform: rotate(45deg); margin-right: 4px; flex: none; }
.status { height: 15px; background: #f1eff2; border-top: 1px solid #c9c8cc; display: flex; align-items: center; padding: 2px 0 0 1px; color: #333; font-size: 8.600px; }
.cells { margin-left: 559px; display: flex; height: 12px; align-items: center; font-size: 8.200px; }
.cells span { height: 12px; line-height: 11px; flex: none; }
.ln { width: 45px; } .col { width: 47px; }
.s1, .s2, .s3, .s4, .s5, .s6, .s7 { border-left: 1px solid #d6d5d9; padding-left: 3px; }
.s1 { width: 36px; } .s2 { width: 37px; } .s3 { width: 42px; padding-left: 7px; border-color: transparent; } .s4 { width: 37px; } .s5 { width: 22px; } .s6 { width: 23px; } .s7 { width: 27px; }
.inner-bar { height: 29px; background: #1b2a35; color: #f2f4f6; display: flex; align-items: stretch; }
.inner-bar .sys { width: 35px; display: grid; place-items: center; flex: none; }
.inner-bar .sys.last { margin-right: 1.500px; }
.inner-bar .sys svg { width: 12px; height: 12px; }
.inner-bar .app { width: 35.700px; display: grid; place-items: center; flex: none; position: relative; }
.inner-bar .app svg { width: 18px; height: 18px; }
.inner-bar .app.run { background: linear-gradient(#76b0e8, #76b0e8) 50% 100% / 29px 2px no-repeat; }
.inner-bar .app.on { background: linear-gradient(#76b0e8, #76b0e8) 50% 100% / 35px 2px no-repeat #45525d; }
.inner-tray { margin-left: auto; width: 331px; padding-left: 0; display: flex; align-items: center; }
.sun { width: 16px; height: 16px; }
.weather { margin-left: 6px; font-size: 10px; }
.w9 { width: 10px; height: 7px; margin-left: 11px; } .w10 { width: 10px; height: 12px; margin-left: 8px; } .w8 { width: 8px; height: 13px; margin-left: 8px; } .w12 { width: 13px; height: 12px; margin-left: 8px; } .w13 { width: 13px; height: 11px; margin-left: 4px; }
.lang { margin-left: 6px; font-size: 8.500px; }
.clock { width: 46px; margin-left: 8px; display: flex; flex-direction: column; align-items: center; gap: 4px; font-size: 9px; margin-top: -2px; }
.bubble { width: 12px; height: 12px; margin-left: 11px; }
.peek { position: absolute; right: 0; top: 521px; width: 11px; height: 38px; background: linear-gradient(#fff 21px, #f0f0f0 21px); color: #aaa; font-size: 8px; overflow: hidden; padding: 6px 0 0 5px; border-top: 1px solid #bbb; }

.chat { flex: 1; background: #fff; display: flex; flex-direction: column; padding: 438px 0 0 1px; color: #232333; }
.who { height: 25px; flex: none; background: #f7f8fd; border-bottom: 1px solid #e6e7ef; display: flex; align-items: center; justify-content: center; gap: 5px; color: #747487; font-size: 11.800px; padding-left: 1px; }
.who svg { width: 13px; height: 14px; }
.to { height: 46px; display: flex; align-items: center; padding-left: 16px; font-size: 11.600px; }
.pill { width: 101px; height: 23px; margin: 0 6px 0 9px; padding: 0 7px; border-radius: 6px; background: #f1f1f6; display: flex; align-items: center; gap: 3px; font-size: 11.300px; }
.pill svg { width: 9px; height: 6px; }
.direct { color: #de6f67; }
.tools { width: 60px; height: 16px; margin: 0 19px 0 auto; }
.compose { padding: 0 0 0 16px; color: #747487; font-size: 12.800px; margin-top: -2px; }

.bar { display: flex; flex: none; color: #000; }
.mid { height: 37px; background: #ececec; align-items: stretch; }
.low { height: 40px; background: linear-gradient(90deg, #d5e6ee, #d4e3ea 70%, #d8dcdf 77%, #d4dee3 84%, #cfe0ea); }
.start { width: 48px; flex: none; display: grid; place-items: center; }
.mid > span { padding-top: 3px; }
.search { width: 344px; flex: none; background: #fff; border: 1px solid #cacaca; display: flex; align-items: center; gap: 12px; padding-left: 11px; color: #333; font-size: 14.500px; }
.mid .search { border-bottom: 0; padding-top: 2px; }
.cell { width: 48px; flex: none; display: grid; place-items: center; position: relative; }
.cell.app { width: 49px; padding-right: 0; }
.cell.app svg { margin-left: 4px; }
.badge { position: absolute; left: 24px; top: 18px; width: 16px; height: 16px; border-radius: 50%; background: #7e57c2; color: #fff; font: 10px/16px Roboto, sans-serif; text-align: center; }
.cell.run { background: linear-gradient(#0078d7, #0078d7) 7px 100% / 40px 2px no-repeat; }
.cell.multi { background: linear-gradient(90deg, #0078d7 32px, #64a9e4 32px) 7px 100% / 40px 2px no-repeat; }
.cell.on { background: linear-gradient(#0078d7, #0078d7) 3px 100% / 48px 2px no-repeat, linear-gradient(#f1f6f8, #f1f6f8) 3px 0 / 48px 100% no-repeat; width: 51px; }
.cell.on svg { margin-left: 3px; }
.tray { margin-left: auto; display: flex; align-items: center; font-size: 12px; }
.mid .tray { padding-top: 3px; }
.chev { width: 12px; height: 8px; }
.meet { width: 12px; height: 16px; margin-left: 12px; }
.ring { width: 16px; height: 16px; margin-left: 10px; }
.battery { width: 16px; height: 12px; margin: 0 8px; }
.wifi { width: 13px; height: 13px; margin-left: 10px; }
.mid .wifi { margin-left: 11px; }
.sound { width: 18px; height: 14px; margin-left: 8px; }
.eng { margin-left: 8px; }
.time, .two { display: flex; flex-direction: column; align-items: center; gap: 5px; margin-left: 13px; width: 58px; font-size: 12px; margin-top: -1px; }
.two { width: 24px; margin-left: 10px; }
.mid .time { margin-left: 13px; }
.notice { width: 25px; height: 26px; margin-left: 18px; position: relative; }
.notice svg { width: 18px; height: 18px; margin-top: 4px; }
.notice b { position: absolute; left: 7px; top: 12px; width: 16px; height: 16px; border-radius: 50%; border: 1px solid #777; background: #d5d9db; font: 11px/14px "Noto Sans", sans-serif; text-align: center; }
.low .notice b { top: 14px; }
.show-desktop { width: 5px; height: 37px; margin-left: 11px; border-left: 1px solid #c1c6c9; }
.plusbox { width: 16px; height: 16px; margin-left: 10px; }

.controls { height: 52px; flex: none; background: #f0f0f0; }
.seek { height: 18px; display: flex; align-items: center; padding-left: 8px; font-size: 11px; color: #000; }
.seek span { margin-top: 1px; }
.track { width: 1261px; height: 9px; margin: 0 16px 0 17px; border-radius: 3px; background: linear-gradient(#b4b4b4, #cfcfcf); overflow: hidden; }
.played { width: 1000px; height: 9px; border-radius: 3px; background: #267fd0; border-top: 1px solid #7ba3c7; }
.buttons { height: 34px; display: flex; align-items: center; padding-left: 4px; }
.btn { width: 24px; height: 24px; border: 1px solid #adadad; background: #e1e1e1; display: grid; place-items: center; flex: none; }
.btn svg { width: 16px; height: 16px; }
.btn.play { width: 30px; height: 30px; }
.btn.play svg { height: 18px; }
.btn-group { display: flex; gap: 2px; margin-left: 14px; }
.volume { margin-left: auto; display: flex; align-items: flex-end; gap: 6px; padding-right: 6px; margin-top: 5px; }
.speaker { width: 14px; height: 12px; }
.wedge { position: relative; width: 74px; height: 23px; }
.wedge svg { width: 74px; height: 23px; }
.wedge span { position: absolute; left: 4px; top: 1px; font-size: 9px; color: #707070; }
</style>
